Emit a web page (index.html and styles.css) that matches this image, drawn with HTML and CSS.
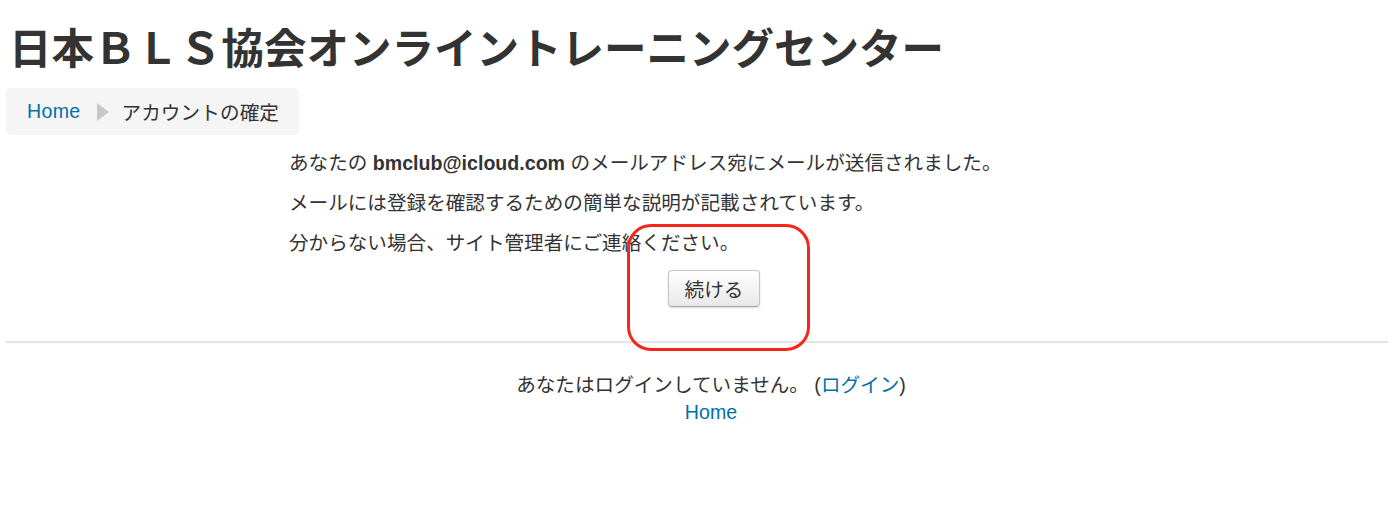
FILE: index.html
```html
<!DOCTYPE html>
<html lang="ja">
<head>
<meta charset="utf-8">
<title>アカウントの確定</title>
<link rel="stylesheet" href="styles.css">
</head>
<body>
<div class="page">
  <header class="header">
    <h1 class="site-title">日本ＢＬＳ協会オンライントレーニングセンター</h1>
    <nav class="breadcrumb">
      <a class="crumb-link" href="#">Home</a>
      <span class="crumb-sep"></span>
      <span class="crumb-current">アカウントの確定</span>
    </nav>
  </header>
  <main class="content">
    <div class="box">
      <p class="msg">あなたの <b>bmclub@icloud.com</b> のメールアドレス宛にメールが送信されました。</p>
      <p class="msg">メールには登録を確認するための簡単な説明が記載されています。</p>
      <p class="msg">分からない場合、サイト管理者にご連絡ください。</p>
      <div class="actions">
        <button class="btn" type="button">続ける</button>
      </div>
    </div>
  </main>
  <footer class="footer">
    <div class="login-info">あなたはログインしていません。 (<a class="link" href="#">ログイン</a>)</div>
    <div class="home-link"><a class="link" href="#">Home</a></div>
  </footer>
</div>
<div class="annotation"></div>
</body>
</html>
```

FILE: styles.css
```css
html, body {
  margin: 0;
  padding: 0;
  background: #ffffff;
}
body {
  font-family: "Liberation Sans", "Noto Sans CJK JP", sans-serif;
  color: #333333;
  font-size: 19.6px;
}
.page {
  padding: 0 0 0 6px;
}
.site-title {
  margin: 0;
  padding: 22px 0 0 3px;
  font-size: 42.5px;
  line-height: 56px;
  font-weight: bold;
  color: #333333;
  letter-spacing: 0;
}
.breadcrumb {
  display: inline-flex;
  align-items: center;
  margin-top: 10px;
  height: 47px;
  padding: 0 20px 0 21px;
  background: #f5f5f5;
  border-radius: 5px;
  box-sizing: border-box;
}
.crumb-link {
  color: #0070a8;
  text-decoration: none;
  letter-spacing: 0.3px;
}
.crumb-sep {
  width: 0;
  height: 0;
  border-top: 9px solid transparent;
  border-bottom: 9px solid transparent;
  border-left: 12px solid #c8c8c8;
  margin: 0 12px 0 17px;
}
.crumb-current {
  color: #333333;
  letter-spacing: 0.1px;
}
.content {
  display: flex;
  padding-left: 283px;
}
.box {
  width: 844px;
  padding-top: 8px;
}
.msg {
  margin: 0;
  line-height: 40px;
}
.msg b {
  font-weight: bold;
}
.actions {
  display: flex;
  justify-content: center;
  padding: 7px 0 0 6px;
}
.btn {
  font-family: "Liberation Sans", "Noto Sans CJK JP", sans-serif;
  font-size: 19.6px;
  color: #333333;
  width: 92px;
  height: 37px;
  padding: 0;
  border: 1px solid #c4c4c4;
  border-bottom-color: #a8a8a8;
  border-radius: 4px;
  background: linear-gradient(#ffffff, #e8e8e8);
  box-shadow: 0 1px 2px rgba(0, 0, 0, 0.15);
}
.footer {
  margin-top: 34px;
  border-top: 2px solid #e3e3e3;
  padding: 26px 0 0 28px;
  text-align: center;
}
.login-info {
  line-height: 32px;
}
.home-link {
  line-height: 22px;
}
.link {
  color: #0070a8;
  text-decoration: none;
}
.annotation {
  position: absolute;
  left: 627px;
  top: 224px;
  width: 183px;
  height: 127px;
  box-sizing: border-box;
  border: 3.5px solid #f4281a;
  border-radius: 24px;
}
```
